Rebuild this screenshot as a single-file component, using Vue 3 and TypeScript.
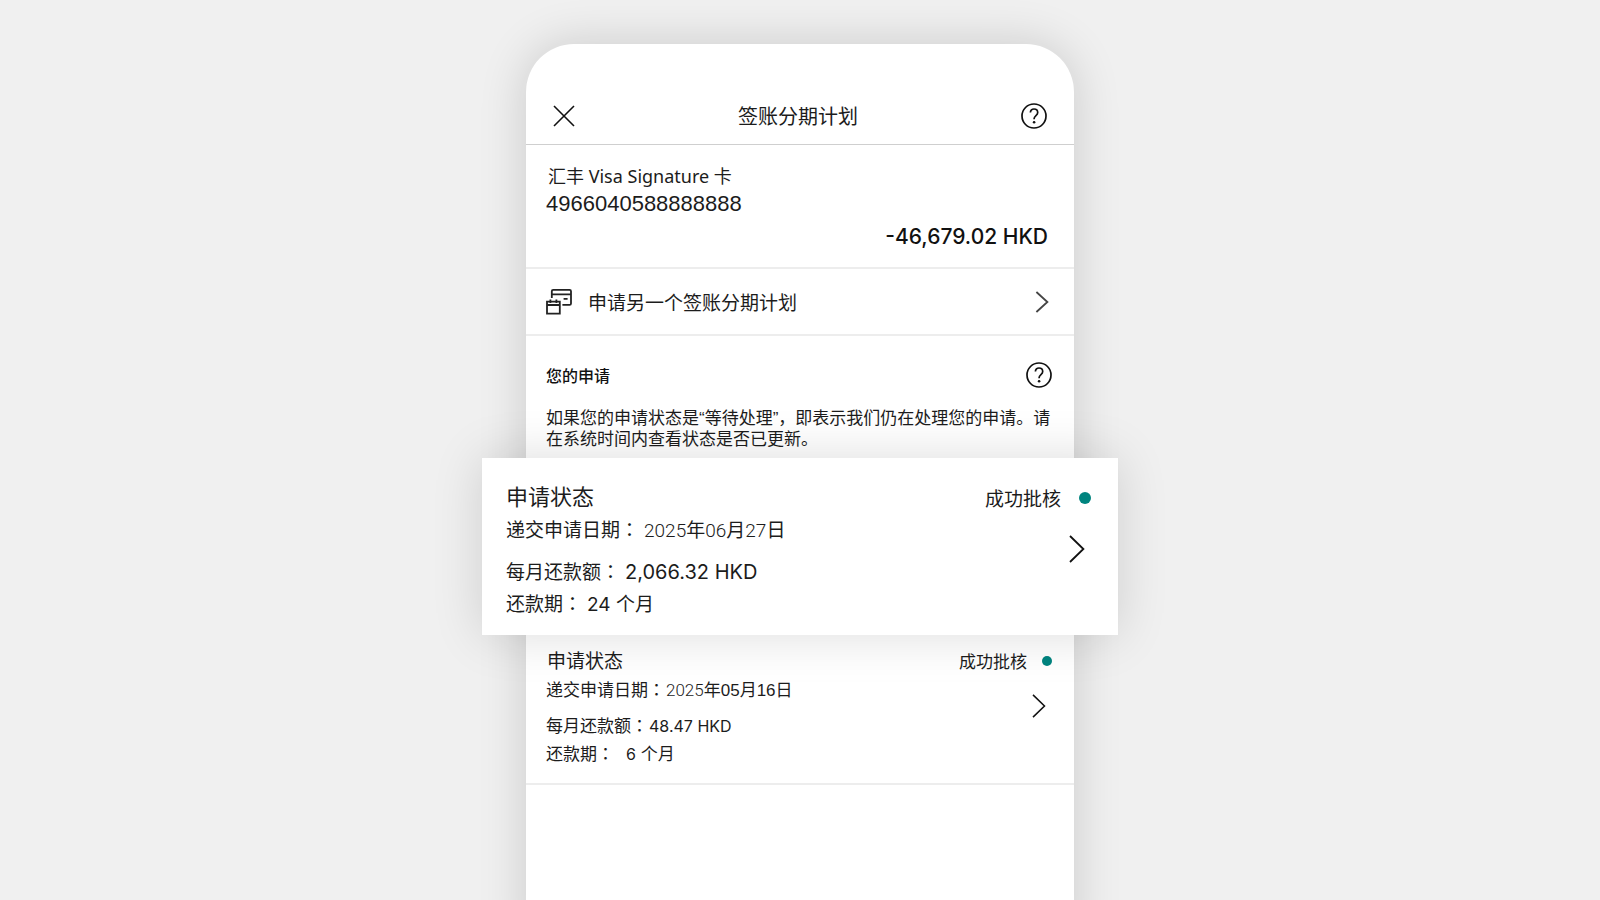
<script setup lang="ts">
interface Application {
  id: string
  featured: boolean
  year: string
  month: string
  day: string
  payment: string
  term: string
}

const accountNumber = '4966040588888888'
const balance = '-46,679.02 HKD'

const applications: Application[] = [
  { id: 'a1', featured: true, year: '2025', month: '06', day: '27', payment: '2,066.32 HKD', term: '24' },
  { id: 'a2', featured: false, year: '2025', month: '05', day: '16', payment: '48.47 HKD', term: '6' },
]
</script>

<template>
  <main class="page">
    <div class="phone">
      <header class="topbar">
        <button class="icon-btn" type="button" aria-label="关闭">
          <svg width="22" height="22" viewBox="0 0 22 22" fill="none" stroke="#111" stroke-width="1.6">
            <path d="M1 1 21 21M21 1 1 21" />
          </svg>
        </button>
        <h1 class="title">签账分期计划</h1>
        <button class="icon-btn" type="button" aria-label="帮助">
          <svg width="26" height="26" viewBox="0 0 26 26" fill="none" stroke="#111" stroke-width="1.7">
            <circle cx="13" cy="13" r="12" />
            <path d="M9.4 9.6C9.4 7.4 11 6 13 6s3.7 1.4 3.7 3.5c0 3.1-3.6 3-3.6 6.3v.5" />
            <circle cx="13.1" cy="19.2" r="1.3" fill="#111" stroke="none" />
          </svg>
        </button>
      </header>

      <section class="account">
        <p class="account-name">汇丰 Visa Signature 卡</p>
        <p class="account-number">{{ accountNumber }}</p>
        <p class="balance">{{ balance }}</p>
      </section>

      <button class="apply" type="button">
        <svg width="27" height="27" viewBox="0 1 27 27" fill="none" stroke="#222" stroke-width="1.8">
          <path d="M5.8 10V3.2Q5.8 1.9 7.2 1.9H23.6Q25 1.9 25 3.2V15.4Q25 16.8 23.6 16.8H16.4M5.8 6.4H25M17.6 10.8H21.6" />
          <path d="M1 13.6H13.8V25.6H1ZM1 17H13.8M4.4 11.4V15M10.4 11.4V15" />
        </svg>
        <span class="apply-text">申请另一个签账分期计划</span>
        <svg width="14" height="22" viewBox="0 0 14 22" fill="none" stroke="#444" stroke-width="1.8">
          <path d="M1.4 1 12.4 11 1.4 21" />
        </svg>
      </button>

      <section class="intro">
        <div class="intro-head">
          <h2 class="intro-title">您的申请</h2>
          <button class="icon-btn" type="button" aria-label="帮助">
            <svg width="26" height="26" viewBox="0 0 26 26" fill="none" stroke="#111" stroke-width="1.7">
              <circle cx="13" cy="13" r="12" />
              <path d="M9.4 9.6C9.4 7.4 11 6 13 6s3.7 1.4 3.7 3.5c0 3.1-3.6 3-3.6 6.3v.5" />
              <circle cx="13.1" cy="19.2" r="1.3" fill="#111" stroke="none" />
            </svg>
          </button>
        </div>
        <p class="intro-text">如果您的申请状态是“等待处理”，即表示我们仍在处理您的申请。请在系统时间内查看状态是否已更新。</p>
      </section>

      <article v-for="item in applications" :key="item.id" class="application" :class="{ featured: item.featured }">
        <div class="details">
          <h3 class="app-title">申请状态</h3>
          <p class="line">递交申请日期<span class="colon">：</span><span class="light">{{ item.year }}</span>年<span :class="item.featured ? 'light' : 'digits'">{{ item.month }}</span>月<span :class="item.featured ? 'light' : 'digits'">{{ item.day }}</span>日</p>
          <p class="line payment">每月还款额<span class="colon">：</span><span class="value">{{ item.payment }}</span></p>
          <p class="line term">还款期<span class="colon">：</span><span class="value">{{ item.term }}</span> 个月</p>
        </div>
        <div class="side">
          <p class="status">成功批核<span class="dot"></span></p>
          <button class="icon-btn open" type="button" aria-label="查看详情">
            <svg class="chevron" viewBox="0 0 16 28" fill="none" stroke="#111" stroke-width="1.8">
              <path d="M1 1 14.4 14 1 27" />
            </svg>
          </button>
        </div>
      </article>
    </div>
  </main>
</template>

<style>
body {
  margin: 0;
  background: #f0f0f0;
}
</style>

<style scoped>
.page {
  height: 100vh;
  box-sizing: border-box;
  padding-top: 44px;
  overflow: hidden;
  background: #f0f0f0;
  color: #1c1c1c;
  font-family: "Liberation Sans", "Noto Sans CJK SC", sans-serif;
}
.page * {
  box-sizing: border-box;
}
h1, h2, h3, p {
  margin: 0;
  font-weight: 400;
}
button {
  border: 0;
  padding: 0;
  background: none;
  color: inherit;
  font: inherit;
  cursor: pointer;
}
svg {
  display: block;
  flex: none;
}
.phone {
  width: 100%;
  max-width: 548px;
  min-height: 100vh;
  margin: 0 auto;
  border-radius: 48px 48px 0 0;
  background: #fff;
  box-shadow: 0 0 48px rgba(0, 0, 0, 0.16);
}
.topbar {
  display: flex;
  align-items: center;
  justify-content: space-between;
  padding: 58px 27px 14px;
  border-bottom: 1px solid #cfcfcf;
}
.title,
.apply-text,
.status {
  font-family: "Noto Sans CJK SC", sans-serif;
}
.title {
  font-size: 20px;
  line-height: 28px;
}
.account {
  padding: 19px 26px 16px 20px;
  border-bottom: 2px solid #ededed;
}
.account-name {
  padding-left: 2px;
  font-family: "Noto Sans", "Noto Sans CJK SC", sans-serif;
  font-size: 18px;
  line-height: 24px;
}
.account-number {
  margin-top: 2px;
  font-size: 22px;
  line-height: 28px;
}
.balance {
  margin-top: 5px;
  font-family: Inter, sans-serif;
  font-size: 21px;
  font-weight: 500;
  line-height: 28px;
  text-align: right;
  color: #111;
}
.apply {
  display: flex;
  align-items: center;
  width: 100%;
  padding: 19px 25px 18px 20px;
  border-bottom: 2px solid #ededed;
  text-align: left;
}
.apply-text {
  flex: 1;
  margin-left: 15px;
  font-size: 19px;
  line-height: 28px;
}
.intro {
  padding: 23px 22px 8px 20px;
}
.intro-head {
  display: flex;
  align-items: center;
  justify-content: space-between;
  height: 31px;
}
.intro-title {
  font-size: 16px;
  font-weight: 500;
  color: #111;
}
.intro-text {
  margin-top: 18px;
  font-size: 17px;
  line-height: 21px;
}
.application {
  display: flex;
  justify-content: space-between;
  padding: 12px 22px 14px 20px;
  border-bottom: 2px solid #ededed;
  font-size: 17px;
}
.app-title {
  padding-left: 1px;
  font-size: 19px;
  line-height: 30px;
}
.line {
  height: 28px;
  line-height: 28px;
  white-space: nowrap;
}
.line span {
  line-height: 1;
}
.payment {
  margin-top: 8px;
}
.colon {
  margin-right: 1px;
  font-family: "Noto Sans CJK TC", sans-serif;
}
.term .colon {
  margin-right: 12px;
}
.light {
  font-family: Roboto, sans-serif;
  font-weight: 300;
}
.value {
  font-family: Inter, sans-serif;
  font-size: 16px;
}
.side {
  display: flex;
  flex-direction: column;
  align-items: flex-end;
}
.status {
  display: flex;
  align-items: center;
  gap: 15px;
  line-height: 28px;
}
.dot {
  width: 10px;
  height: 10px;
  border-radius: 50%;
  background: #00847f;
}
.open {
  margin: 19px 6px 0 0;
}
.chevron {
  width: 14px;
  height: 24px;
}
.featured {
  position: relative;
  margin: 0 -44px;
  padding: 23px 27px 14px 24px;
  border-bottom: 0;
  background: #fff;
  box-shadow: 0 0 48px rgba(0, 0, 0, 0.14);
  font-size: 19px;
}
.featured .app-title {
  padding-left: 0;
  font-size: 22px;
  line-height: 34px;
}
.featured .line {
  height: 32px;
  line-height: 32px;
}
.featured .payment {
  margin-top: 10px;
}
.featured .colon {
  margin-right: 5px;
}
.featured .value {
  font-size: 20px;
}
.featured .term .value {
  font-size: 19px;
}
.featured .status {
  gap: 18px;
  line-height: 34px;
}
.featured .dot {
  width: 12px;
  height: 12px;
}
.featured .open {
  margin: 20px 6px 0 0;
}
.featured .chevron {
  width: 16px;
  height: 28px;
}
</style>
